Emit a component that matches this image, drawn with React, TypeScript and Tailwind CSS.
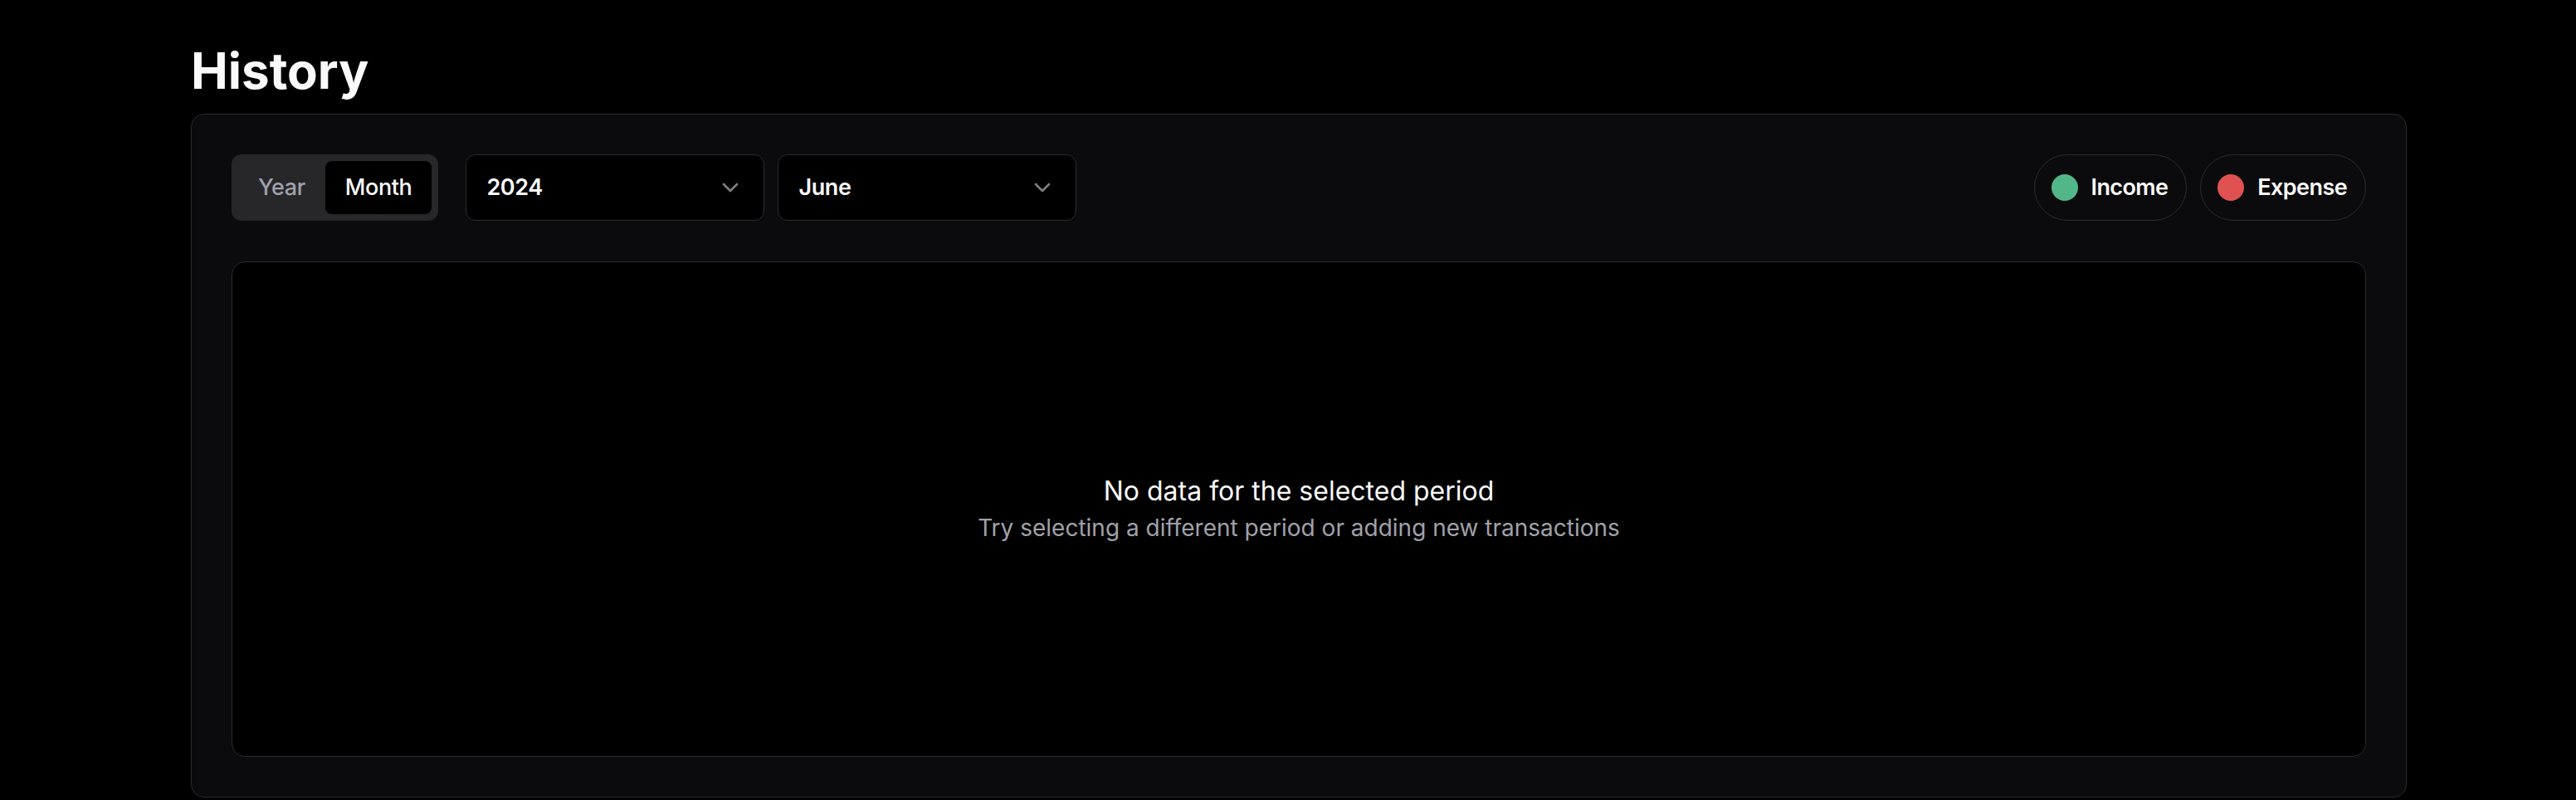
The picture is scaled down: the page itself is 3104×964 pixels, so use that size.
import { ChevronDown } from "lucide-react";

const font = { fontFamily: "Inter, 'Noto Sans', sans-serif" };

function SelectBox({ value }: { value: string }) {
  return (
    <button
      type="button"
      className="flex h-[80px] w-[360px] items-center justify-between rounded-[12px] border border-[#2c2c30] bg-black px-[24px] text-[27px] font-semibold tracking-[-0.4px] text-[#fafafa]"
    >
      <span>{value}</span>
      <ChevronDown className="h-[32px] w-[32px] text-[#fafafa] opacity-50" strokeWidth={2} />
    </button>
  );
}

function LegendPill({ label, color }: { label: string; color: string }) {
  return (
    <div className="flex h-[80px] items-center gap-[16px] rounded-full border border-[#2c2c30] px-[20px]">
      <span className={`h-[32px] w-[32px] rounded-full ${color}`} />
      <span className="pr-[2px] text-[27px] font-semibold tracking-[-0.6px] text-[#fafafa]">{label}</span>
    </div>
  );
}

export default function App() {
  return (
    <div className="min-h-screen bg-black pl-[230px] pr-[204px] pt-[49px]" style={font}>
      <h1 className="mb-[16px] text-[60px] font-bold leading-[72px] text-[#fafafa]">History</h1>

      <section className="rounded-[16px] border border-[#2a2a2e] bg-[#0b0b0d] p-[48px]">
        {/* controls */}
        <div className="flex items-center justify-between">
          <div className="flex items-center gap-[33px]">
            <div className="flex h-[80px] items-center rounded-[12px] bg-[#27272a] p-[8px]">
              <button type="button" className="flex h-[64px] items-center rounded-[8px] px-[24px] text-[27px] font-medium tracking-[-0.4px] text-[#a1a1aa]">
                Year
              </button>
              <button type="button" className="flex h-[64px] items-center rounded-[8px] bg-black px-[24px] text-[27px] font-medium tracking-[-0.4px] text-[#fafafa]">
                Month
              </button>
            </div>
            <div className="flex items-center gap-[16px]">
              <SelectBox value="2024" />
              <SelectBox value="June" />
            </div>
          </div>

          <div className="flex items-center gap-[16px]">
            <LegendPill label="Income" color="bg-[#52b788]" />
            <LegendPill label="Expense" color="bg-[#e05252]" />
          </div>
        </div>

        {/* chart area */}
        <div className="mt-[49px] flex h-[597px] flex-col items-center justify-center rounded-[16px] border border-[#2c2c30] bg-black">
          <p className="text-[32px] leading-[44px] text-[#fafafa]">No data for the selected period</p>
          <p className="text-[28px] leading-[44px] text-[#a1a1aa]">Try selecting a different period or adding new transactions</p>
        </div>
      </section>
    </div>
  );
}
